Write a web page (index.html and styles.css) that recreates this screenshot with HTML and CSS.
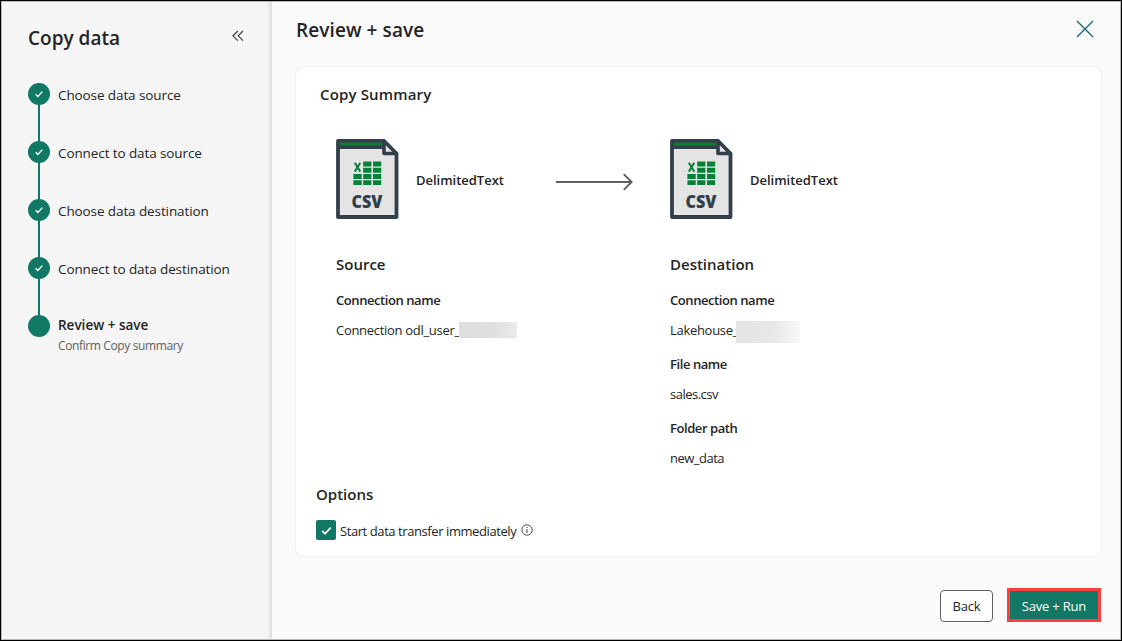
FILE: index.html
```html
<!DOCTYPE html>
<html lang="en">
<head>
<meta charset="utf-8">
<title>Copy data</title>
<link rel="stylesheet" href="styles.css">
</head>
<body>
<svg class="defs" width="0" height="0" aria-hidden="true">
  <symbol id="check" viewBox="0 0 12 12"><path d="M2 6.4 4.6 9 10 3.2" fill="none" stroke="#fff" stroke-width="1.6"/></symbol>
  <symbol id="csv" viewBox="0 0 63 80">
    <path d="M2 2H48L60.5 15V78H2Z" fill="#e4e4e4" stroke="#333f4a" stroke-width="3.8" stroke-linejoin="round"/>
    <path d="M2 2H48V10H2Z" fill="#333f4a"/>
    <path d="M3.8 3.4H47V6.4H3.8Z" fill="#0a7d33"/>
    <path d="M48 2V14.5H60.5Z" fill="#e4e4e4" stroke="#333f4a" stroke-width="3.6" stroke-linejoin="round"/>
    <path d="M27.2 22.5h8.2v5.1h-8.2zM37 22.5h8.2v5.1H37zM27.2 28.8h8.2v5h-8.2zM37 28.8h8.2v5H37zM17.4 35h8.3v5h-8.3zM27.2 35h8.2v5h-8.2zM37 35h8.2v5H37zM17.4 41.2h8.3v4.8h-8.3zM27.2 41.2h8.2v4.8h-8.2zM37 41.2h8.2v4.8H37z" fill="#078137"/>
    <path d="M18.8 23.8 24.3 32.6M24.3 23.8 18.8 32.6" stroke="#078137" stroke-width="2" fill="none"/>
  </symbol>
</svg>
<div class="window">
  <aside class="sidebar">
    <header class="side-head">
      <h1 class="side-title">Copy data</h1>
      <svg class="collapse" width="12" height="12" viewBox="0 0 12 12"><path d="M5.8 1 1 5.8 5.8 10.6M11 1 6.2 5.8 11 10.6" fill="none" stroke="#333" stroke-width="1.1"/></svg>
    </header>
    <ol class="steps">
      <li class="step"><span class="dot"><svg width="10" height="10"><use href="#check"/></svg></span><span class="label">Choose data source</span></li>
      <li class="step"><span class="dot"><svg width="10" height="10"><use href="#check"/></svg></span><span class="label">Connect to data source</span></li>
      <li class="step"><span class="dot"><svg width="10" height="10"><use href="#check"/></svg></span><span class="label">Choose data destination</span></li>
      <li class="step"><span class="dot"><svg width="10" height="10"><use href="#check"/></svg></span><span class="label">Connect to data destination</span></li>
      <li class="step current"><span class="dot"></span><span class="label"><b class="now">Review + save</b><small class="hint">Confirm Copy summary</small></span></li>
    </ol>
  </aside>
  <main class="main">
    <header class="head">
      <h2 class="title">Review + save</h2>
      <svg class="close" width="18" height="18" viewBox="0 0 18 18"><path d="M1 1 17 17M17 1 1 17" stroke="#146d70" stroke-width="1.4"/></svg>
    </header>
    <section class="card">
      <h3 class="summary">Copy Summary</h3>
      <div class="flow">
        <svg width="63" height="80"><use href="#csv"/><text x="15.5" y="68.5" class="csv-text" textLength="31" lengthAdjust="spacingAndGlyphs">CSV</text></svg>
        <span class="type">DelimitedText</span>
        <svg class="arrow" width="78" height="18" viewBox="0 0 78 18"><path d="M0 9H75.5M67.8 1.2 75.6 9 67.8 16.8" fill="none" stroke="#605e5c" stroke-width="1.9"/></svg>
        <svg width="63" height="80"><use href="#csv"/><text x="15.5" y="68.5" class="csv-text" textLength="31" lengthAdjust="spacingAndGlyphs">CSV</text></svg>
        <span class="type">DelimitedText</span>
      </div>
      <div class="details">
        <div class="col">
          <h4 class="group">Source</h4>
          <div class="name">Connection name</div>
          <div class="value"><span class="conn">Connection odl_user_</span><i class="mask mask-a"></i></div>
        </div>
        <div class="col">
          <h4 class="group">Destination</h4>
          <div class="name">Connection name</div>
          <div class="value"><span class="lake">Lakehouse_</span><i class="mask mask-b"></i></div>
          <div class="name">File name</div>
          <div class="value">sales.csv</div>
          <div class="name">Folder path</div>
          <div class="value">new_data</div>
        </div>
      </div>
      <h4 class="options">Options</h4>
      <div class="option">
        <span class="box"><svg width="13" height="13"><use href="#check"/></svg></span>
        <span class="start">Start data transfer immediately</span>
        <svg width="12" height="12" viewBox="0 0 12 12"><circle cx="6" cy="6" r="5.2" fill="none" stroke="#444" stroke-width=".9"/><path d="M6 5v4M6 3v1.1" stroke="#444"/></svg>
      </div>
    </section>
    <footer class="actions">
      <button class="btn back">Back</button>
      <div class="highlight"><button class="btn run">Save + Run</button></div>
    </footer>
  </main>
</div>
</body>
</html>
```
FILE: styles.css
```css
* { box-sizing: border-box; }
body { margin: 0; border: 1px solid #000; height: 641px; font: 14px/20px "Open Sans", "Noto Sans", sans-serif; color: #242424; overflow: hidden; }
h1, h2, h3, h4 { margin: 0; font-weight: 600; white-space: nowrap; }
ol { margin: 0; padding: 0; list-style: none; }
svg { display: block; flex: none; }
.defs { position: absolute; }
.window { display: flex; height: 639px; border: 1px solid #b9b9b9; background: #fafafa; }
.sidebar { width: 270px; flex: none; padding: 22px 0 0 26px; background: linear-gradient(to right, #f5f5f5 264px, #eeeeee 267px, #d9d9d9 270px); }
.side-head { display: flex; height: 59px; padding-right: 28px; justify-content: space-between; }
.side-title { font-size: 19px; line-height: 28px; }
.collapse { margin-top: 6px; }
.step { display: flex; height: 58px; gap: 8px; background: linear-gradient(#117865, #117865) 10px 0 / 2px 100% no-repeat; }
.step.current { background: none; }
.dot { display: flex; width: 22px; height: 22px; flex: none; align-items: center; justify-content: center; border-radius: 50%; background: #117865; }
.label { margin-top: 2px; font-size: 13.5px; letter-spacing: -.1px; white-space: nowrap; }
.current .label { margin-top: 0; }
.now, .hint { display: block; }
.now { font-weight: 600; letter-spacing: 0; }
.hint { margin-top: 1px; font-size: 12px; letter-spacing: -.38px; color: #616161; }
.main { flex: 1; padding: 0 19px 0 24px; }
.head { display: flex; height: 65px; justify-content: space-between; padding-right: 7px; }
.title { margin-top: 14px; font-size: 19px; line-height: 28px; letter-spacing: .1px; }
.close { margin-top: 18px; }
.card { height: 489px; padding: 16px 20px 0; background: #fff; border-radius: 8px; box-shadow: 0 0 2px rgba(0,0,0,.14); }
.summary { margin-left: 4px; font-size: 15px; line-height: 22px; letter-spacing: .15px; }
.flow { display: flex; margin: 34px 0 0 20px; align-items: center; }
.type { width: 140px; margin: 1px 0 0 17px; font-size: 13px; font-weight: 600; letter-spacing: -.02px; }
.arrow { margin: 6px 36px 0 0; }
.csv-text { font: 800 17px "Open Sans", sans-serif; fill: #333f4a; }
.details { display: grid; grid-template-columns: 334px 1fr; height: 230px; margin: 34px 0 0 20px; }
.group { margin-bottom: 15px; font-size: 15px; line-height: 22px; }
.name { font-size: 13px; font-weight: 600; letter-spacing: -.43px; }
.value { display: flex; height: 20px; margin: 10px 0 14px; font-size: 13px; letter-spacing: -.5px; white-space: nowrap; }
.mask { display: block; flex: none; }
.mask-a { width: 58px; height: 16px; margin-top: 2px; background: linear-gradient(to right, #dedede, #e0e0e0 65%, #ebebeb); }
.mask-b { width: 64px; height: 22px; margin-top: 1px; background: linear-gradient(to right, #e4e4e4, #e8e8e8 60%, #f7f7f7); }
.conn { width: 123px; letter-spacing: -.3px; }
.lake { width: 66px; letter-spacing: -.3px; }
.options { font-size: 15px; line-height: 22px; }
.option { display: flex; height: 20px; margin-top: 15px; align-items: center; font-size: 13px; }
.box { display: flex; width: 20px; height: 20px; margin-right: 4px; align-items: center; justify-content: center; border-radius: 2px; background: #117865; }
.start { width: 177px; margin: 2px 4px 0 0; height: 20px; letter-spacing: -.42px; white-space: nowrap; }
.actions { display: flex; margin-top: 32px; justify-content: flex-end; align-items: center; gap: 14px; }
.btn { padding: 0; font: 13px/20px "Open Sans", sans-serif; letter-spacing: -.2px; }
.back { width: 53px; height: 32px; margin-top: 2px; color: #242424; background: #fff; border: 1px solid #616161; border-radius: 4px; }
.highlight { width: 94px; height: 34px; border: 3px solid #ff3f3f; }
.run { display: block; width: 88px; height: 28px; padding-top: 2px; color: #fff; background: #117865; border: 0; }
```
